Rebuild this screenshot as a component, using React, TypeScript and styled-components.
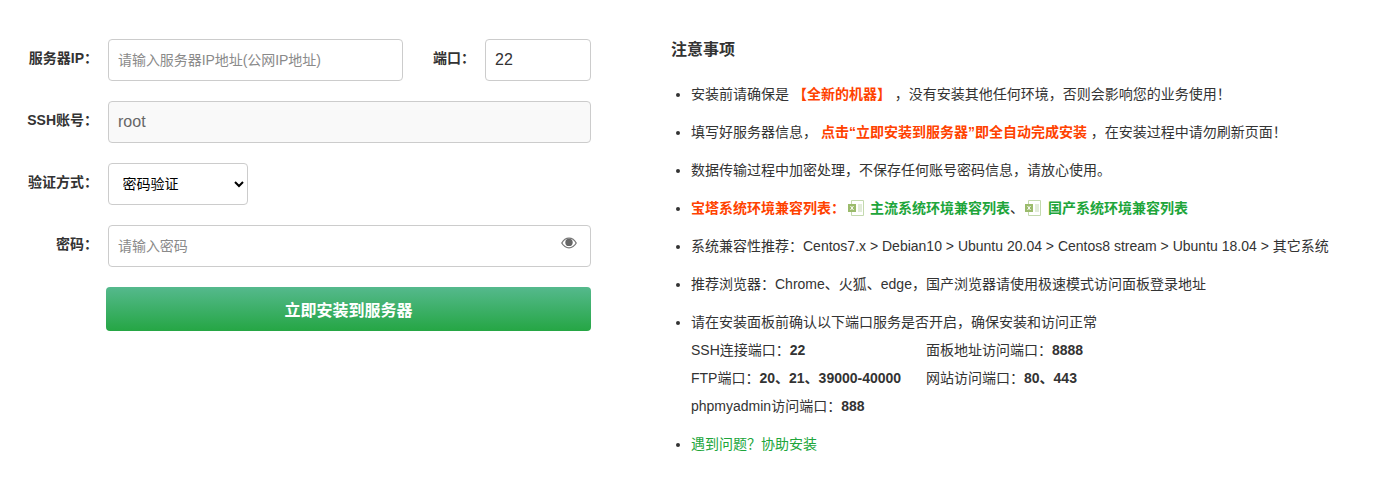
import styled, { createGlobalStyle } from "styled-components";

const GlobalStyle = createGlobalStyle`
  html, body {
    margin: 0;
    padding: 0;
    background: #fff;
    font-family: "Liberation Sans", "Noto Sans CJK SC", sans-serif;
    color: #333;
  }
`;

const ports = [
  [
    { label: "SSH连接端口：", value: "22" },
    { label: "面板地址访问端口：", value: "8888" },
  ],
  [
    { label: "FTP端口：", value: "20、21、39000-40000" },
    { label: "网站访问端口：", value: "80、443" },
  ],
  [{ label: "phpmyadmin访问端口：", value: "888" }],
];

function SheetIcon({ tight }: { tight?: boolean }) {
  return (
    <IconSvg $tight={tight} viewBox="0 0 16 16" width="16" height="16">
      <path d="M3.500 .5h12v15h-12z" fill="#fff" stroke="#c3d9ae" />
      <rect x="10" y="4" width="4" height="8" fill="#e2ecd9" />
      <rect x="0" y="4" width="8" height="8" fill="#9bbb6c" />
      <path d="M2.500 6l3 4M5.500 6l-3 4" stroke="#fff" strokeWidth="1" />
    </IconSvg>
  );
}

export default function App() {
  return (
    <>
      <GlobalStyle />
      <Page>
        <FormSld>
          <Row>
            <Label>服务器IP：</Label>
            <Input $width={295} placeholder="请输入服务器IP地址(公网IP地址)" />
            <PortLabel>端口：</PortLabel>
            <Input $width={106} defaultValue="22" />
          </Row>
          <Row>
            <Label>SSH账号：</Label>
            <Input $width={483} $disabled readOnly value="root" />
          </Row>
          <Row>
            <Label>验证方式：</Label>
            <Select defaultValue="password">
              <option value="password">密码验证</option>
              <option value="key">私钥验证</option>
            </Select>
          </Row>
          <Row>
            <Label>密码：</Label>
            <PasswordBox>
              <Input $width={483} type="password" placeholder="请输入密码" />
              <EyeIcon viewBox="0 0 16 12" width="16" height="12">
                <path
                  d="M.8 6C2.600 2.800 5 1.200 8 1.200S13.400 2.800 15.200 6C13.400 9.200 11 10.800 8 10.800S2.600 9.200.8 6z"
                  fill="none"
                  stroke="#777"
                  strokeWidth="1.300"
                />
                <circle cx="8" cy="5.400" r="3.700" fill="#666" />
              </EyeIcon>
            </PasswordBox>
          </Row>
          <SubmitBtn type="button">立即安装到服务器</SubmitBtn>
        </FormSld>

        <NoticeSld>
          <Title>注意事项</Title>
          <List>
            <Item>
              安装前请确保是 <Red>【全新的机器】</Red> ，没有安装其他任何环境，否则会影响您的业务使用！
            </Item>
            <Item>
              填写好服务器信息， <Red>点击“立即安装到服务器”即全自动完成安装</Red> ，在安装过程中请勿刷新页面！
            </Item>
            <Item>数据传输过程中加密处理，不保存任何账号密码信息，请放心使用。</Item>
            <Item>
              <Red>宝塔系统环境兼容列表：</Red>
              <SheetLink>
                <SheetIcon />
                主流系统环境兼容列表
              </SheetLink>
              <Sep>、</Sep>
              <SheetLink>
                <SheetIcon tight />
                国产系统环境兼容列表
              </SheetLink>
            </Item>
            <Item>系统兼容性推荐：Centos7.x &gt; Debian10 &gt; Ubuntu 20.04 &gt; Centos8 stream &gt; Ubuntu 18.04 &gt; 其它系统</Item>
            <Item>推荐浏览器：Chrome、火狐、edge，国产浏览器请使用极速模式访问面板登录地址</Item>
            <Item>
              请在安装面板前确认以下端口服务是否开启，确保安装和访问正常
              {ports.map((row) => (
                <PortRow key={row[0].label}>
                  {row.map((port) => (
                    <PortCell key={port.label}>
                      {port.label}
                      <b>{port.value}</b>
                    </PortCell>
                  ))}
                </PortRow>
              ))}
            </Item>
            <Item>
              <HelpLink>遇到问题？协助安装</HelpLink>
            </Item>
          </List>
        </NoticeSld>
      </Page>
    </>
  );
}

const Page = styled.div`
  display: flex;
  align-items: flex-start;
  width: 1377px;
  height: 495px;
  overflow: hidden;
  box-sizing: border-box;
  padding-top: 29px;
`;

const FormSld = styled.form`
  display: flex;
  flex-direction: column;
  width: 591px;
  padding-top: 10px;
  gap: 20px;
`;

const Row = styled.div`
  display: flex;
  align-items: center;
`;

const Label = styled.label`
  width: 98px;
  margin-right: 10px;
  margin-top: -6px;
  flex-shrink: 0;
  text-align: right;
  white-space: nowrap;
  font-size: 14px;
  font-weight: bold;
  color: #333;
`;

const PortLabel = styled(Label)`
  width: 42px;
  margin-left: 30px;
  margin-right: 10px;
`;

const Input = styled.input<{ $width: number; $disabled?: boolean }>`
  width: ${(p) => p.$width}px;
  height: 42px;
  box-sizing: border-box;
  padding: 0 9px;
  border: 1px solid #ccc;
  border-radius: 4px;
  outline: none;
  font-family: inherit;
  font-size: 16px;
  color: ${(p) => (p.$disabled ? "#666" : "#333")};
  background: ${(p) => (p.$disabled ? "#f9f9f9" : "#fff")};

  &::placeholder {
    font-size: 14px;
    letter-spacing: -0.05px;
    color: #8a8a8a;
    opacity: 1;
  }
`;

const Select = styled.select`
  width: 140px;
  height: 42px;
  box-sizing: border-box;
  padding: 0 9.5px;
  border: 1px solid #ccc;
  border-radius: 4px;
  background: #fff;
  font-family: inherit;
  font-size: 14px;
  color: #000;
`;

const PasswordBox = styled.div`
  position: relative;
  display: flex;
`;

const EyeIcon = styled.svg`
  position: absolute;
  top: 12px;
  right: 14px;
`;

const SubmitBtn = styled.button`
  width: 485px;
  height: 44px;
  margin-left: 106px;
  border: none;
  border-radius: 4px;
  background: linear-gradient(#55b98d, #25a644);
  color: #fff;
  font-family: inherit;
  font-size: 16px;
  font-weight: bold;
`;

const NoticeSld = styled.div`
  margin-left: 80px;
  width: 700px;
`;

const Title = styled.div`
  font-size: 16px;
  font-weight: bold;
  line-height: 42px;
  color: #333;
`;

const List = styled.ul`
  margin: 8.5px 0 0;
  padding: 0 0 0 20px;
`;

const Item = styled.li`
  font-size: 14px;
  line-height: 28px;
  margin-bottom: 10.1px;
  color: #333;
  white-space: nowrap;
`;

const Red = styled.b`
  color: #ff4200;
`;

const SheetLink = styled.b`
  color: #20a53a;
`;

const IconSvg = styled.svg<{ $tight?: boolean }>`
  vertical-align: -3px;
  margin-left: ${(p) => (p.$tight ? "1px" : "3px")};
  margin-right: ${(p) => (p.$tight ? "7px" : "6px")};
`;

const Sep = styled.span`
  color: #333;
`;

const PortRow = styled.div`
  display: flex;
`;

const PortCell = styled.span`
  width: 235px;
`;

const HelpLink = styled.a`
  color: #20a53a;
`;
